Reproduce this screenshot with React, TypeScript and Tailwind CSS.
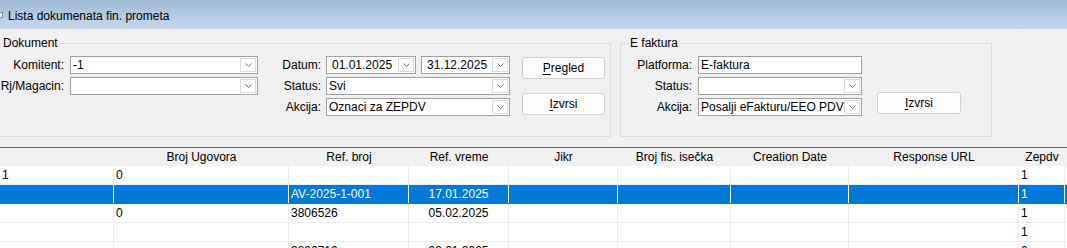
import clsx from "clsx";

type Col = { title: string; w: string; align?: "left" | "center" };

const COLS: Col[] = [
  { title: "", w: "w-[114px]" },
  { title: "Broj Ugovora", w: "w-[175px]" },
  { title: "Ref. broj", w: "w-[120px]" },
  { title: "Ref. vreme", w: "w-[100px]", align: "center" },
  { title: "Jikr", w: "w-[109px]" },
  { title: "Broj fis. isečka", w: "w-[113px]" },
  { title: "Creation Date", w: "w-[118px]" },
  { title: "Response URL", w: "w-[170px]" },
  { title: "Zepdv", w: "w-[46px]" },
  { title: "", w: "w-[60px]" },
];

const ROWS: string[][] = [
  ["1", "0", "", "", "", "", "", "", "1", ""],
  ["", "", "AV-2025-1-001", "17.01.2025", "", "", "", "", "1", ""],
  ["", "0", "3806526", "05.02.2025", "", "", "", "", "1", ""],
  ["", "", "", "", "", "", "", "", "1", ""],
  ["", "", "3806710", "03.01.2025", "", "", "", "", "0", ""],
];

const SELECTED = 1;

function Chevron() {
  return (
    <svg width="7" height="4" viewBox="0 0 7 4">
      <path d="M0.5 0.5L3.5 3.5L6.5 0.5" fill="none" stroke="#6f6f6f" strokeWidth="1" />
    </svg>
  );
}

function Combo({
  value,
  className,
  date,
}: {
  value?: string;
  className: string;
  date?: boolean;
}) {
  return (
    <div className={clsx("flex h-[18px] border border-[#a0a0a0] bg-white", className)}>
      <div
        className={clsx(
          "min-w-0 flex-1 overflow-hidden whitespace-nowrap leading-[16px]",
          date ? "pl-[5px]" : "pl-[2px]"
        )}
      >
        {value}
      </div>
      <div className="my-[1px] mr-[1px] flex w-[16px] items-center justify-center border border-[#dcdcdc] bg-white">
        <Chevron />
      </div>
    </div>
  );
}

function TextBox({ value, className }: { value: string; className: string }) {
  return (
    <div
      className={clsx(
        "h-[18px] border border-[#a0a0a0] bg-white pl-[2px] leading-[16px]",
        className
      )}
    >
      {value}
    </div>
  );
}

function Label({ children }: { children: string }) {
  return <div className="h-[18px] text-right leading-[18px]">{children}</div>;
}

function Btn({ first, rest }: { first: string; rest: string }) {
  return (
    <button className="h-[22px] rounded-[3px] border border-[#d0d0d0] bg-[#fdfdfd] text-[12px] leading-[20px] text-black">
      <span className="underline underline-offset-2">{first}</span>
      {rest}
    </button>
  );
}

export default function App() {
  return (
    <div className="h-[248px] w-[1067px] overflow-hidden bg-[#f0f0f0] font-['Liberation_Sans',Arial,sans-serif] text-[12px] text-black">
      {/* Title bar */}
      <div className="flex h-[29px] items-center bg-gradient-to-b from-[#a0bad7] to-[#c6d8ec]">
        <svg width="8" height="8" viewBox="0 0 8 8" className="-ml-[5px] mr-[5px]">
          <rect x="0" y="1" width="8" height="6" fill="#7f8ea3" />
          <rect x="1" y="2" width="6" height="4" fill="#e8eef6" />
        </svg>
        <span className="pt-[2px]">Lista dokumenata fin. prometa</span>
      </div>

      {/* Groups */}
      <div className="mt-[7px] flex">
        <fieldset className="-ml-[10px] h-[101px] w-[621px] border border-[#dcdcdc] p-0">
          <legend className="ml-[10px] px-[2px] leading-[14px]">Dokument</legend>
          <div className="flex items-start pt-[6px]">
            <div className="grid content-start grid-cols-[73px_188px] gap-x-[6px] gap-y-[3px]">
              <Label>Komitent:</Label>
              <Combo value="-1" className="w-[188px]" />
              <Label>Rj/Magacin:</Label>
              <Combo className="w-[188px]" />
            </div>
            <div className="grid content-start grid-cols-[63px_184px] gap-x-[5px] gap-y-[3px]">
              <Label>Datum:</Label>
              <div className="flex gap-[5px]">
                <Combo value="01.01.2025" date className="w-[90px]" />
                <Combo value="31.12.2025" date className="w-[89px]" />
              </div>
              <Label>Status:</Label>
              <Combo value="Svi" className="w-[184px]" />
              <Label>Akcija:</Label>
              <Combo value="Oznaci za ZEPDV" className="w-[184px]" />
            </div>
            <div className="ml-[12px] flex w-[83px] flex-col gap-[14px] pt-[1px]">
              <Btn first="P" rest="regled" />
              <Btn first="I" rest="zvrsi" />
            </div>
          </div>
        </fieldset>

        <fieldset className="ml-[9px] h-[101px] w-[372px] border border-[#dcdcdc] p-0">
          <legend className="ml-[7px] px-[2px] leading-[14px]">E faktura</legend>
          <div className="flex items-start pt-[6px]">
            <div className="grid content-start grid-cols-[71px_164px] gap-x-[6px] gap-y-[3px]">
              <Label>Platforma:</Label>
              <TextBox value="E-faktura" className="w-[164px]" />
              <Label>Status:</Label>
              <Combo className="w-[164px]" />
              <Label>Akcija:</Label>
              <Combo value="Posalji eFakturu/EEO PDV" className="w-[164px]" />
            </div>
            <div className="ml-[15px] mt-[36px] flex w-[84px] flex-col">
              <Btn first="I" rest="zvrsi" />
            </div>
          </div>
        </fieldset>
      </div>

      {/* Grid */}
      <div className="mt-[10px] border-t border-[#646464]">
        <div className="flex h-[18px] bg-[#f0f0f0]">
          {COLS.map((c, i) => (
            <div key={i} className={clsx("shrink-0 text-center leading-[18px]", c.w)}>
              {c.title}
            </div>
          ))}
        </div>
        {ROWS.map((row, r) => {
          const sel = r === SELECTED;
          return (
            <div
              key={r}
              className={clsx(
                "flex h-[19px] border-b",
                sel ? "border-[#0078d7] bg-[#0078d7] text-white" : "border-[#ececec] bg-white"
              )}
            >
              {row.map((cell, i) => (
                <div
                  key={i}
                  className={clsx(
                    "shrink-0 overflow-hidden whitespace-nowrap border-r px-[2px] leading-[18px]",
                    COLS[i].w,
                    COLS[i].align === "center" && "text-center",
                    sel ? "border-white" : "border-[#ececec]"
                  )}
                >
                  {cell}
                </div>
              ))}
            </div>
          );
        })}
      </div>
    </div>
  );
}
